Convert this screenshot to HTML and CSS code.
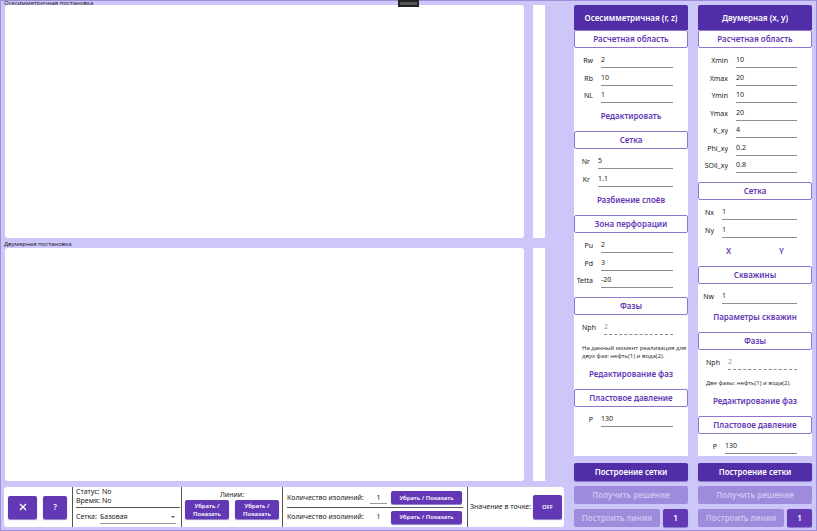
FILE: index.html
```html
<!DOCTYPE html>
<html lang="ru">
<head>
<meta charset="utf-8">
<title>Постановка задачи</title>
<link rel="stylesheet" href="styles.css">
</head>
<body>
<div class="app">
  <div class="notch"></div>
  <main class="workspace">
    <h2 class="plot-title plot-title-top">Осесимметричная постановка</h2>
    <div class="plots"><div class="plot"></div><div class="legend"></div></div>
    <h2 class="plot-title">Двумерная постановка</h2>
    <div class="plots"><div class="plot"></div><div class="legend"></div></div>

    <footer class="toolbar">
      <div class="tools">
        <button class="btn btn-icon btn-close" aria-label="Закрыть"><svg viewBox="0 0 10 10" width="10" height="10"><path d="M2 2 8 8M8 2 2 8"/></svg></button>
        <button class="btn btn-icon">?</button>
      </div>
      <div class="status">
        <dl class="facts">
          <dt>Статус:</dt><dd>No</dd>
          <dt>Время:</dt><dd>No</dd>
        </dl>
        <div class="mesh">
          <label for="mesh">Сетка:</label>
          <div class="select"><select id="mesh"><option>Базовая</option></select></div>
        </div>
      </div>
      <div class="lines">
        <span>Линии:</span>
        <div class="lines-buttons">
          <button class="btn btn-small">Убрать /<br>Показать</button>
          <button class="btn btn-small">Убрать /<br>Показать</button>
        </div>
      </div>
      <div class="isolines">
        <div class="iso-row">
          <label for="iso1">Количество изолиний:</label>
          <input id="iso1" class="count count-lined" value="1">
          <button class="btn btn-small">Убрать / Показать</button>
        </div>
        <div class="iso-row">
          <label for="iso2">Количество изолиний:</label>
          <input id="iso2" class="count" value="1">
          <button class="btn btn-small">Убрать / Показать</button>
        </div>
      </div>
      <div class="point">
        <span>Значение в точке:</span>
        <button class="btn btn-small btn-off">OFF</button>
      </div>
    </footer>
  </main>

  <aside class="column">
    <button class="column-title">Осесимметричная (r, z)</button>
    <div class="panel">
      <section>
        <button class="section-title">Расчетная область</button>
        <div class="fields">
          <div class="field"><label for="rw">Rw</label><input id="rw" value="2"></div>
          <div class="field"><label for="rb">Rb</label><input id="rb" value="10"></div>
          <div class="field"><label for="nl">NL</label><input id="nl" value="1"></div>
        </div>
        <button class="action">Редактировать</button>
      </section>
      <section class="labels-narrow">
        <button class="section-title">Сетка</button>
        <div class="fields">
          <div class="field"><label for="nr">Nr</label><input id="nr" value="5"></div>
          <div class="field"><label for="kr">Kr</label><input id="kr" value="1.1"></div>
        </div>
        <button class="action">Разбиение слоёв</button>
      </section>
      <section class="no-action">
        <button class="section-title">Зона перфорации</button>
        <div class="fields">
          <div class="field"><label for="pu">Pu</label><input id="pu" value="2"></div>
          <div class="field"><label for="pd">Pd</label><input id="pd" value="3"></div>
          <div class="field"><label for="tetta">Tetta</label><input id="tetta" value="-20"></div>
        </div>
      </section>
      <section class="labels-phase">
        <button class="section-title">Фазы</button>
        <div class="fields">
          <div class="field"><label for="nph1">Nph</label><input id="nph1" value="2" disabled></div>
        </div>
        <p class="note note-tall">На данный момент реализация для двух фаз: нефть(1) и вода(2).</p>
        <button class="action">Редактирование фаз</button>
      </section>
      <section>
        <button class="section-title">Пластовое давление</button>
        <div class="fields">
          <div class="field"><label for="p1">P</label><input id="p1" value="130"></div>
        </div>
      </section>
    </div>
    <div class="commands">
      <button class="btn btn-dark">Построение сетки</button>
      <button class="btn" disabled>Получить решение</button>
      <div class="command-pair">
        <button class="btn" disabled>Построить линии</button>
        <button class="btn">1</button>
      </div>
    </div>
  </aside>

  <aside class="column">
    <button class="column-title">Двумерная (x, y)</button>
    <div class="panel">
      <section class="labels-wide no-action">
        <button class="section-title">Расчетная область</button>
        <div class="fields">
          <div class="field"><label for="xmin">Xmin</label><input id="xmin" value="10"></div>
          <div class="field"><label for="xmax">Xmax</label><input id="xmax" value="20"></div>
          <div class="field"><label for="ymin">Ymin</label><input id="ymin" value="10"></div>
          <div class="field"><label for="ymax">Ymax</label><input id="ymax" value="20"></div>
          <div class="field"><label for="kxy">K_xy</label><input id="kxy" value="4"></div>
          <div class="field"><label for="phixy">Phi_xy</label><input id="phixy" value="0.2"></div>
          <div class="field"><label for="soil">SOil_xy</label><input id="soil" value="0.8"></div>
        </div>
      </section>
      <section class="labels-narrow">
        <button class="section-title">Сетка</button>
        <div class="fields">
          <div class="field"><label for="nx">Nx</label><input id="nx" value="1"></div>
          <div class="field"><label for="ny">Ny</label><input id="ny" value="1"></div>
        </div>
        <div class="action-pair">
          <button class="action">X</button>
          <button class="action">Y</button>
        </div>
      </section>
      <section class="labels-narrow">
        <button class="section-title">Скважины</button>
        <div class="fields">
          <div class="field"><label for="nw">Nw</label><input id="nw" value="1"></div>
        </div>
        <button class="action">Параметры скважин</button>
      </section>
      <section class="labels-phase">
        <button class="section-title">Фазы</button>
        <div class="fields">
          <div class="field"><label for="nph2">Nph</label><input id="nph2" value="2" disabled></div>
        </div>
        <p class="note">Две фазы: нефть(1) и вода(2).</p>
        <button class="action">Редактирование фаз</button>
      </section>
      <section>
        <button class="section-title">Пластовое давление</button>
        <div class="fields">
          <div class="field"><label for="p2">P</label><input id="p2" value="130"></div>
        </div>
      </section>
    </div>
    <div class="commands">
      <button class="btn btn-dark">Построение сетки</button>
      <button class="btn" disabled>Получить решение</button>
      <div class="command-pair">
        <button class="btn" disabled>Построить линии</button>
        <button class="btn">1</button>
      </div>
    </div>
  </aside>
</div>
</body>
</html>
```
FILE: styles.css
```css
:root {
  --violet: #6338b5;
  --violet-dark: #512da8;
  --back: #ccc7f8;
  --edge: #9f8fdb;
}

* { box-sizing: border-box; }

body {
  margin: 0;
  font: 7px/10px "Noto Sans", sans-serif;
  color: #222;
}

button, input, select {
  font: inherit;
  color: inherit;
  margin: 0;
  padding: 0;
  border: 0;
  background: none;
  border-radius: 0;
  min-width: 0;
}

button { font-weight: 600; }

.app {
  position: relative;
  display: grid;
  grid-template-columns: minmax(0, 1fr) 114px 114px;
  column-gap: 10px;
  height: 100vh;
  padding: 0 5px 3px 4px;
  background: var(--back);
  box-shadow: inset 0 0 0 1px var(--edge);
}

.notch {
  position: absolute;
  top: 0;
  left: 50%;
  width: 21px;
  height: 7px;
  margin-left: -11px;
  background: #555;
  border: 2px solid #222;
}

.workspace {
  display: grid;
  grid-template-rows: 5px minmax(0, 1fr) 10px minmax(0, 1fr) 47px;
}

.plot-title {
  display: flex;
  align-items: flex-end;
  margin: 0;
  font-family: "Open Sans", sans-serif;
  font-size: 6px;
  font-weight: 400;
  line-height: 8px;
  color: #111;
}

.plot-title-top { align-items: flex-start; line-height: 6px; }

.plots {
  display: grid;
  grid-template-columns: minmax(0, 1fr) 12px;
  column-gap: 9px;
  padding: 0 19px 0 1px;
}

.plot { background: #fff; border-radius: 3px; }
.legend { background: #fff; }

.toolbar {
  display: grid;
  grid-template-columns: 68px 109px 101px 185px minmax(0, 1fr);
  margin-top: 6px;
  height: 40px;
  background: #fff;
  border-radius: 3px;
}

.toolbar > div + div { border-left: 1px solid #555; }

.btn {
  background: var(--violet);
  color: #fff;
  border-radius: 2px;
  font-size: 8px;
  box-shadow: 0 1px 1px #8878c4;
}

.btn-dark { background: var(--violet-dark); }
.btn:disabled { background: #9f8bdb; color: #cfc4f2; box-shadow: none; }
.btn-small { font-size: 6px; line-height: 8px; }

.tools {
  display: grid;
  grid-template-columns: 29px 24px;
  column-gap: 6px;
  align-content: center;
  padding-left: 4px;
}

.btn-icon { height: 23px; }
.btn-close { display: grid; place-items: center; }
.btn-close svg { fill: none; stroke: #fff; stroke-width: 1.4; }

.status { padding: 0 1px 0 3px; }

.facts {
  display: grid;
  grid-template-columns: 22px 1fr;
  column-gap: 4px;
  margin: 0;
  padding: 0 0 2px;
  line-height: 9px;
  border-bottom: 1px solid #555;
}

.facts dd { margin: 0; }

.mesh {
  display: grid;
  grid-template-columns: 24px 1fr;
  align-items: center;
  padding: 2px 4px 0 0;
}

.select { position: relative; border-bottom: 1px solid #999; }
.select::after {
  content: "";
  position: absolute;
  right: 1px;
  top: 6px;
  border: 2px solid transparent;
  border-top-color: #555;
}

.select select { appearance: none; width: 100%; height: 13px; }

.lines {
  display: flex;
  flex-direction: column;
  align-items: center;
  padding: 3px 3px 0;
}

.lines-buttons {
  display: grid;
  grid-template-columns: 1fr 1fr;
  column-gap: 6px;
  align-self: stretch;
}

.lines-buttons .btn { height: 19px; }

.isolines { padding: 1px 4px 0; }

.iso-row {
  display: grid;
  grid-template-columns: minmax(0, 1fr) 17px 71px;
  column-gap: 4px;
  align-items: center;
  height: 19px;
  padding-right: 1px;
}

.iso-row + .iso-row { border-top: 1px solid #555; }
.iso-row label { white-space: nowrap; }
.iso-row .btn { height: 13px; }
.count { width: 100%; height: 13px; text-align: center; border-bottom: 1px solid transparent; }
.count-lined { border-bottom-color: #999; }

.point {
  display: flex;
  align-items: center;
  justify-content: space-between;
  padding: 0 2px;
  white-space: nowrap;
}

.btn-off { width: 29px; height: 24px; }

.column {
  display: flex;
  flex-direction: column;
  min-height: 0;
  padding-top: 5px;
  padding-bottom: 1px;
}

.column-title {
  flex: none;
  height: 25px;
  background: var(--violet-dark);
  color: #fff;
  font-size: 8px;
  border-radius: 2px 2px 0 0;
}

.panel {
  flex: 1;
  min-height: 0;
  overflow: hidden;
  background: #fff;
}

section { display: flex; flex-direction: column; --label: 19px; }
.labels-wide { --label: 30px; }
.labels-narrow { --label: 16px; }
.labels-phase { --label: 22px; }
.no-action { padding-bottom: 9px; }

.section-title {
  height: 18px;
  border: 1px solid #8e74cb;
  border-radius: 2px;
  color: var(--violet);
  font-size: 8px;
}

.fields { padding: 3px 15px 0 0; }

.field {
  display: grid;
  grid-template-columns: var(--label) minmax(0, 1fr);
  column-gap: 8px;
  height: 17px;
}

.field:nth-child(even) { height: 18px; }
.field label { padding-top: 3px; align-self: center; white-space: nowrap; justify-self: end; }
.field input { width: 100%; border-bottom: 1px solid #8c8c8c; padding-top: 2px; }
.field input:disabled { color: #999; border-bottom-style: dashed; }

.action {
  height: 28px;
  padding-bottom: 2px;
  color: var(--violet);
  font-size: 8px;
}

.action-pair { display: grid; grid-template-columns: 1fr 1fr; padding: 0 4px; }

.note {
  display: flex;
  align-items: center;
  height: 18px;
  margin: 0;
  padding: 8px 0 0 8px;
  font-family: "Open Sans", sans-serif;
  font-size: 6px;
  line-height: 8px;
}

.note-tall { height: 26px; }

.commands { display: grid; row-gap: 5px; padding-top: 7px; }
.commands .btn { height: 18px; }
.command-pair { display: grid; grid-template-columns: minmax(0, 1fr) 25px; column-gap: 3px; }
```
